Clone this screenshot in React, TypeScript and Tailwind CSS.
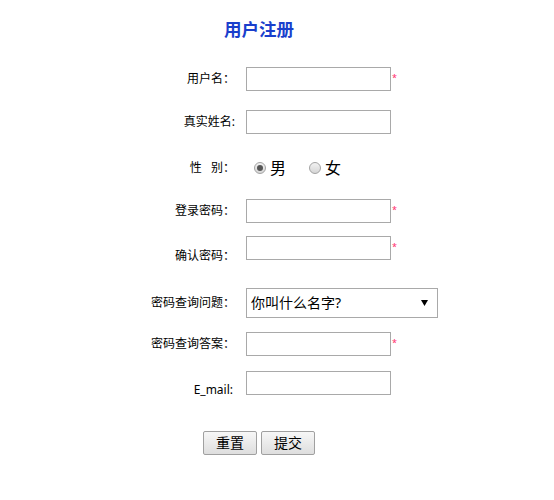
import React from "react";

const font = { fontFamily: '"Noto Sans", "Noto Sans CJK SC", sans-serif' };

function Label({ text, className = "" }: { text: string; className?: string }) {
  return (
    <div className={`w-[235px] shrink-0 text-right text-[12px] leading-[16px] text-black ${className}`}>{text}</div>
  );
}

function Box({ star = false }: { star?: boolean }) {
  return (
    <div className="flex items-start">
      <input type="text" className="w-[145px] h-[24px] border border-[#a9a9a9] bg-white outline-none px-1 text-[13px]" />
      {star && <span className="ml-[1px] mt-[6px] text-[9px] leading-[9px] text-[#ff2a6a]">*</span>}
    </div>
  );
}

function Radio({ checked, label }: { checked?: boolean; label: string }) {
  return (
    <label className="flex items-center">
      <span className="w-[12px] h-[12px] rounded-full border border-[#a3a3a3] bg-gradient-to-b from-[#f2f2f2] to-[#d6d6d6] flex items-center justify-center">
        {checked && <span className="w-[6px] h-[6px] rounded-full bg-[#555]" />}
      </span>
      <span className="ml-[4px] text-[16px] leading-[20px] text-black">{label}</span>
    </label>
  );
}

export default function App() {
  return (
    <div className="w-[554px] h-[500px] bg-white" style={font}>
      <div className="pt-[19px] w-[518px] text-center text-[17.5px] leading-[20px] font-bold text-[#1a3fcc]">用户注册</div>

      <div className="mt-[28px] flex items-center">
        <Label text="用户名：" />
        <div className="ml-[11px]"><Box star /></div>
      </div>

      <div className="mt-[19px] flex items-center">
        <Label text="真实姓名:" />
        <div className="ml-[11px]"><Box /></div>
      </div>

      <div className="mt-[22px] h-[24px] flex items-center">
        <Label text="性   别：" className="whitespace-pre" />
        <div className="ml-[19px] flex items-center gap-[23px]">
          <Radio checked label="男" />
          <Radio label="女" />
        </div>
      </div>

      <div className="mt-[19px] flex items-center">
        <Label text="登录密码：" />
        <div className="ml-[11px]"><Box star /></div>
      </div>

      <div className="mt-[13px] flex items-start">
        <Label text="确认密码：" className="mt-[12px]" />
        <div className="ml-[11px]"><Box star /></div>
      </div>

      <div className="mt-[24px] flex items-center">
        <Label text="密码查询问题：" />
        <div className="ml-[11px] w-[192px] h-[30px] border border-[#a9a9a9] bg-white flex items-center justify-between pl-[4px] pr-[9px]">
          <span className="text-[14px] leading-[18px] text-black">你叫什么名字?</span>
          <svg width="7" height="6" viewBox="0 0 7 6"><path d="M0 0h7L3.5 6z" fill="#000" /></svg>
        </div>
      </div>

      <div className="mt-[14px] flex items-center">
        <Label text="密码查询答案：" />
        <div className="ml-[11px]"><Box star /></div>
      </div>

      <div className="mt-[15px] flex items-start">
        <Label text="E_mail:" className="mt-[11px] pr-[2px]" />
        <div className="ml-[11px]"><Box /></div>
      </div>

      <div className="mt-[33px] pl-[203px] flex gap-[4px]">
        {["重置", "提交"].map(t => (
          <button key={t} className="w-[54px] h-[24px] border border-[#a0a0a0] rounded-[2px] bg-gradient-to-b from-[#f7f7f7] to-[#dedede] text-[14px] leading-[18px] text-black">
            {t}
          </button>
        ))}
      </div>
    </div>
  );
}
